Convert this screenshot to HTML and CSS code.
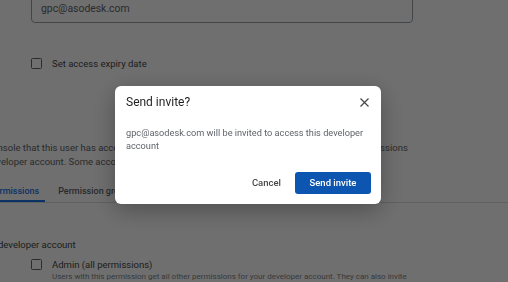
FILE: index.html
```html
<!DOCTYPE html>
<html lang="en">
<head>
  <meta charset="UTF-8">
  <meta name="viewport" content="width=device-width, initial-scale=1.0">
  <title>Invite user</title>
  <link rel="stylesheet" href="styles.css">
</head>
<body>
  <main class="page">
    <div class="field">gpc@asodesk.com</div>

    <label class="check">
      <span class="box"></span>
      Set access expiry date
    </label>

    <section class="perms">
      <p class="intro">
        Console that this user has access to. Account permissions apply to all apps, or add app permissions<br>
        developer account. Some account permissions also give access to app data
      </p>

      <nav class="tabs">
        <span class="tab active">Permissions</span>
        <span class="tab">Permission groups</span>
      </nav>

      <h3 class="scope">developer account</h3>

      <div class="perm">
        <span class="box"></span>
        <div>
          <div class="perm-name">Admin (all permissions)</div>
          <div class="perm-desc">Users with this permission get all other permissions for your developer account. They can also invite</div>
        </div>
      </div>
    </section>
  </main>

  <!-- Confirmation dialog -->
  <div class="scrim">
    <div class="dialog" role="dialog" aria-labelledby="dialog-title">
      <div class="dialog-head">
        <h2 id="dialog-title">Send invite?</h2>
        <button class="close" aria-label="Close">
          <svg width="9" height="9" viewBox="0 0 9 9">
            <path d="M0.5 0.5 L8.5 8.5 M8.5 0.5 L0.5 8.5" stroke="#444746" stroke-width="1.2" fill="none"/>
          </svg>
        </button>
      </div>
      <p class="dialog-text">gpc@asodesk.com will be invited to access this developer account</p>
      <div class="dialog-actions">
        <button class="btn-text">Cancel</button>
        <button class="btn-primary">Send invite</button>
      </div>
    </div>
  </div>
</body>
</html>
```

FILE: styles.css
```css
* {
  margin: 0;
  padding: 0;
  box-sizing: border-box;
}

body {
  font-family: Roboto, 'Liberation Sans', sans-serif;
  background: #ffffff;
  color: #444746;
  width: 508px;
  height: 282px;
  overflow: hidden;
}

.page {
  padding-left: 31px;
}

.field {
  margin-top: -20px;
  width: 382px;
  padding: 21px 9px 6px;
  border: 1px solid #9aa0a6;
  border-radius: 4px;
  font-size: 10.4px;
  line-height: 14px;
  color: #5f6368;
}

.check {
  display: flex;
  align-items: center;
  gap: 10px;
  margin-top: 34px;
  font-size: 9.5px;
  line-height: 13px;
  color: #444746;
}

.box {
  flex: none;
  width: 11px;
  height: 11px;
  border: 1.5px solid #5f6368;
  border-radius: 1.5px;
}

/* this block starts left of the visible frame */
.perms {
  margin-left: -45px;
}

.intro {
  margin-top: 71px;
  font-size: 9.5px;
  line-height: 14px;
  white-space: nowrap;
  color: #5f6368;
}

.tabs {
  display: flex;
  gap: 7px;
  margin-top: 1px;
  margin-left: -3px;
  border-bottom: 1px solid #dadce0;
  width: 600px;
}

.tab {
  padding: 14px 6px 2px;
  font-size: 9px;
  line-height: 14px;
  font-weight: 500;
  color: #5f6368;
  border-bottom: 2px solid transparent;
  white-space: nowrap;
}

.tab.active {
  color: #1a73e8;
  border-bottom-color: #1a73e8;
}

.scope {
  margin-top: 35px;
  padding-left: 12px;
  font-size: 9.5px;
  line-height: 14px;
  font-weight: 400;
  color: #444746;
}

.perm {
  display: flex;
  gap: 10px;
  margin-top: 6px;
  padding-left: 45px;
}

.perm .box {
  margin-top: 1px;
}

.perm-name {
  font-size: 9.5px;
  line-height: 13px;
  color: #444746;
}

.perm-desc {
  font-size: 8px;
  line-height: 11px;
  color: #80868b;
  white-space: nowrap;
}

/* dialog */

.scrim {
  position: fixed;
  inset: 0;
  background: rgba(0, 0, 0, 0.565);
}

.dialog {
  position: absolute;
  left: 115px;
  top: 86px;
  width: 266px;
  padding: 0 9px 10px 11px;
  background: #ffffff;
  border-radius: 6px;
  box-shadow: 0 6px 24px rgba(0, 0, 0, 0.3);
}

.dialog-head {
  display: flex;
  align-items: center;
  justify-content: space-between;
  height: 32px;
  margin-right: -2px;
}

.dialog-head h2 {
  font-size: 12px;
  font-weight: 400;
  color: #1f1f1f;
}

.close {
  width: 20px;
  height: 20px;
  display: flex;
  align-items: center;
  justify-content: center;
  background: none;
  border: none;
}

.dialog-text {
  margin-top: 7.5px;
  font-size: 9.2px;
  line-height: 13px;
  color: #5f6368;
}

.dialog-actions {
  display: flex;
  justify-content: flex-end;
  gap: 6px;
  margin-top: 20px;
  margin-right: 1px;
}

.dialog-actions button {
  height: 22px;
  font-family: inherit;
  font-size: 9.5px;
  font-weight: 500;
  border: none;
  border-radius: 3px;
}

.btn-text {
  padding: 0 8px;
  background: none;
  color: #444746;
}

.btn-primary {
  width: 76px;
  background: #0c56b2;
  color: #ffffff;
}
```
